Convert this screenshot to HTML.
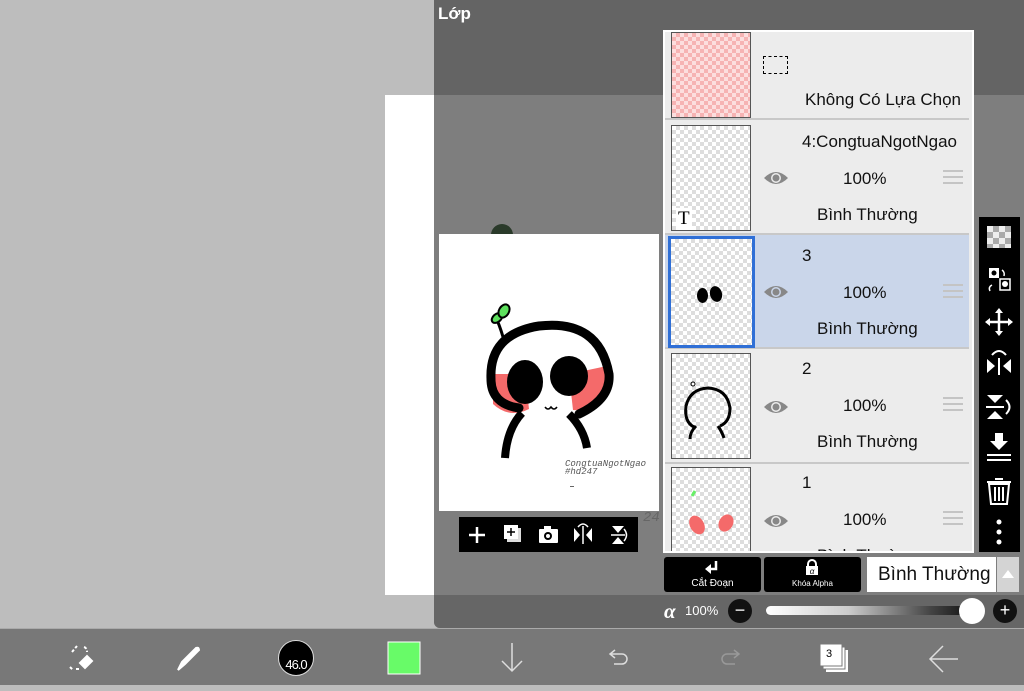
<!DOCTYPE html>
<html><head><meta charset="utf-8"><style>
*{margin:0;padding:0;box-sizing:border-box}
body{width:1024px;height:685px;overflow:hidden;position:relative;background:#bdbdbd;font-family:"Liberation Sans","Noto Sans CJK SC",sans-serif}
.a{position:absolute}
.chk{background-color:#fff;background-image:linear-gradient(45deg,#ddd 25%,transparent 25%,transparent 75%,#ddd 75%),linear-gradient(45deg,#ddd 25%,transparent 25%,transparent 75%,#ddd 75%);background-size:8px 8px;background-position:0 0,4px 4px}
.pchk{background-color:#fcdede;background-image:linear-gradient(45deg,#f6b3b3 25%,transparent 25%,transparent 75%,#f6b3b3 75%),linear-gradient(45deg,#f6b3b3 25%,transparent 25%,transparent 75%,#f6b3b3 75%);background-size:8px 8px;background-position:0 0,4px 4px}
.row{position:absolute;left:0;width:304px;background:#ececec;border-bottom:2px solid #c8c8c8}
.th{position:absolute;left:6px;width:80px;border:1px solid #555}
.t{position:absolute;color:#111;font-size:17px;white-space:nowrap}
.eye{position:absolute;left:98px;width:26px;height:16px}
.ham{position:absolute;left:278px;width:20px}
.ham i{display:block;height:2px;background:#c4c4c4;margin-bottom:4px}
</style></head><body>
<div class="a" style="left:385px;top:95px;width:49px;height:500px;background:#fff"></div>
<!-- panel -->
<div class="a" style="left:434px;top:0;width:590px;height:628px;background:#7e7e7e;border-bottom-left-radius:6px;overflow:hidden">
  <div class="a" style="left:0;top:0;width:590px;height:95px;background:#646464"></div>
  <div class="a" style="left:0;top:595px;width:590px;height:33px;background:#666"></div>
  <div class="a" style="left:4px;top:4px;color:#fff;font-weight:bold;font-size:17px">Lớp</div>
</div>
<div class="a" style="left:491px;top:224px;width:22px;height:14px;border-radius:11px 11px 0 0;background:#2a3a2a"></div>
<!-- preview -->
<div class="a" style="left:439px;top:234px;width:220px;height:277px;background:#fff">
<svg width="220" height="277" viewBox="0 0 220 277">
 <path d="M66 110 Q62 95 58 86" stroke="#000" stroke-width="3" fill="none"/>
 <ellipse cx="58" cy="84" rx="6" ry="4" transform="rotate(-40 58 84)" fill="#5de05d" stroke="#000" stroke-width="2"/>
 <ellipse cx="65" cy="77" rx="5" ry="7" transform="rotate(30 65 77)" fill="#5de05d" stroke="#000" stroke-width="2"/>
 <path d="M54 140 L54 170 Q70 185 90 175 L86 140Z" fill="#f46a6a"/>
 <path d="M130 140 L168 132 L168 155 Q150 178 134 176Z" fill="#f46a6a"/>
 <path d="M80 174 Q52 170 52 145 Q50 100 100 92 Q160 85 170 140 Q172 165 140 180" stroke="#000" stroke-width="9" fill="none" stroke-linecap="round"/>
 <ellipse cx="86" cy="148" rx="18" ry="22" fill="#000"/>
 <ellipse cx="130" cy="142" rx="19" ry="20" fill="#000"/>
 <path d="M83 179 Q68 195 66 224" stroke="#000" stroke-width="8" fill="none"/>
 <path d="M130 180 Q145 195 148 214" stroke="#000" stroke-width="8" fill="none"/>
 <path d="M106 173 q3 4 6 0 q3 4 6 0" stroke="#000" stroke-width="1.5" fill="none"/>
 <text x="126" y="232" font-family="Liberation Mono" font-style="italic" font-size="9" fill="#555">CongtuaNgotNgao</text>
 <text x="126" y="240" font-family="Liberation Mono" font-style="italic" font-size="9" fill="#555">#hd247</text>
 <rect x="131" y="252" width="4" height="1" fill="#666"/>
</svg></div>
<div class="a" style="left:643px;top:510px;color:#666;font-family:'Liberation Mono';font-style:italic;font-size:14px">24</div>
<div class="a" style="left:459px;top:517px;width:179px;height:35px;background:#000">
<svg width="179" height="35" viewBox="0 0 179 35" fill="#fff" stroke="#fff">
 <path d="M18 10v16M10 18h16" stroke-width="2.5"/>
 <rect x="48" y="11" width="14" height="14" fill="#ddd" stroke="none"/><rect x="45" y="8" width="14" height="14" stroke="none"/><path d="M52 11v8M48 15h8" stroke="#000" stroke-width="1.5"/>
 <rect x="80" y="12" width="19" height="14" rx="1" stroke="none"/><rect x="85" y="9" width="7" height="4" stroke="none"/><circle cx="89" cy="19" r="4" fill="#000" stroke="none"/><circle cx="89" cy="19" r="2" stroke="none"/>
 <path d="M115 11l6 7-6 7z M133 11l-6 7 6 7z" stroke="none"/><path d="M124 9v18" stroke-width="1.5"/><path d="M119 10q5-6 10 0" fill="none" stroke-width="1.5"/>
 <path d="M153 9h12l-6 7z M153 27h12l-6-7z" stroke="none"/><path d="M152 18h14" stroke-width="1.5"/><path d="M165 12q5 6 0 12" fill="none" stroke-width="1.5"/>
</svg></div>
<!-- layers -->
<div class="a" style="left:663px;top:30px;width:311px;height:523px;background:#fff;border:2px solid #fff;overflow:hidden">
 <div class="a" style="left:0;top:0;width:307px;height:519px;background:#ececec;overflow:hidden">
  <div class="row" style="top:0;height:88px"><div class="th pchk" style="top:0;height:86px"></div>
   <div class="a" style="left:98px;top:24px;width:25px;height:18px;border:1px dashed #000"></div>
   <div class="t" style="left:140px;top:58px">Không Có Lựa Chọn</div></div>
  <div class="row" style="top:89px;height:114px"><div class="th chk" style="top:4px;height:106px"><span class="a" style="left:4px;bottom:0;font-family:'Liberation Serif';font-size:19px;background:#fff;padding:0 2px">T</span></div>
   <svg class="eye" style="top:49px" viewBox="0 0 26 16"><path d="M1 8Q13-4 25 8Q13 20 1 8Z" fill="#888"/><circle cx="13" cy="8" r="5" fill="#ececec"/><circle cx="13" cy="8" r="3.5" fill="#888"/></svg>
   <div class="t" style="left:137px;top:11px">4:CongtuaNgotNgao</div><div class="t" style="left:178px;top:48px">100%</div><div class="t" style="left:152px;top:84px">Bình Thường</div>
   <div class="ham" style="top:49px"><i></i><i></i><i></i></div></div>
  <div class="row" style="top:203px;height:114px;background:#cad6ea"><div class="th chk" style="left:3px;top:1px;width:87px;height:112px;border:3px solid #2f6fd6"></div>
   <div class="a" style="left:32px;top:53px;width:11px;height:15px;border-radius:50%;background:#000"></div><div class="a" style="left:45px;top:51px;width:12px;height:16px;border-radius:50%;background:#000;transform:rotate(-15deg)"></div>
   <svg class="eye" style="top:49px" viewBox="0 0 26 16"><path d="M1 8Q13-4 25 8Q13 20 1 8Z" fill="#888"/><circle cx="13" cy="8" r="5" fill="#cad6ea"/><circle cx="13" cy="8" r="3.5" fill="#888"/></svg>
   <div class="t" style="left:137px;top:11px">3</div><div class="t" style="left:178px;top:48px">100%</div><div class="t" style="left:152px;top:84px">Bình Thường</div>
   <div class="ham" style="top:49px"><i></i><i></i><i></i></div></div>
  <div class="row" style="top:318px;height:114px"><div class="th chk" style="top:3px;height:106px">
   <svg width="78" height="104" viewBox="0 0 78 104"><path d="M22 73Q12 68 14 52Q18 35 36 34Q55 35 58 54Q58 68 48 72" stroke="#000" stroke-width="3" fill="none"/><path d="M24 72Q18 78 18 85M46 72Q50 78 52 84" stroke="#000" stroke-width="3" fill="none"/><circle cx="21" cy="30" r="2" stroke="#000" fill="none"/></svg></div>
   <svg class="eye" style="top:49px" viewBox="0 0 26 16"><path d="M1 8Q13-4 25 8Q13 20 1 8Z" fill="#888"/><circle cx="13" cy="8" r="5" fill="#ececec"/><circle cx="13" cy="8" r="3.5" fill="#888"/></svg>
   <div class="t" style="left:137px;top:9px">2</div><div class="t" style="left:178px;top:46px">100%</div><div class="t" style="left:152px;top:82px">Bình Thường</div>
   <div class="ham" style="top:47px"><i></i><i></i><i></i></div></div>
  <div class="row" style="top:432px;height:100px"><div class="th chk" style="top:3px;height:100px">
   <svg width="78" height="100" viewBox="0 0 78 100"><path d="M20 28l3-5" stroke="#6e6" stroke-width="3"/><ellipse cx="25" cy="57" rx="7" ry="10" transform="rotate(-30 25 57)" fill="#f46a6a"/><ellipse cx="54" cy="55" rx="7" ry="9" transform="rotate(30 54 55)" fill="#f46a6a"/></svg></div>
   <svg class="eye" style="top:49px" viewBox="0 0 26 16"><path d="M1 8Q13-4 25 8Q13 20 1 8Z" fill="#888"/><circle cx="13" cy="8" r="5" fill="#ececec"/><circle cx="13" cy="8" r="3.5" fill="#888"/></svg>
   <div class="t" style="left:137px;top:9px">1</div><div class="t" style="left:178px;top:46px">100%</div><div class="t" style="left:152px;top:82px">Bình Thường</div>
   <div class="ham" style="top:47px"><i></i><i></i><i></i></div></div>
 </div></div>
<!-- right toolbar -->
<div class="a" style="left:979px;top:217px;width:41px;height:335px;background:#000">
<svg width="41" height="335" viewBox="0 0 41 335" fill="#fff" stroke="#fff">
 <rect x="8" y="9" width="24" height="22" fill="#aaa" stroke="none"/>
 <path d="M8 9h6v6h-6zM20 9h6v6h-6zM14 15h6v6h-6zM26 15h6v6h-6zM8 21h6v6h-6zM20 21h6v6h-6zM14 27h6v4h-6zM26 27h6v4h-6z" fill="#eee" stroke="none"/>
 <rect x="10" y="51" width="10" height="10" stroke="none"/><circle cx="15" cy="56" r="2.5" fill="#000" stroke="none"/>
 <rect x="21" y="62" width="10" height="11" fill="none" stroke-width="1.5"/><circle cx="26" cy="67" r="3" stroke="none"/>
 <path d="M23 53q3 2 2 6M11 74q-2-4 2-6" fill="none" stroke-width="1.5"/>
 <path d="M20 94v22M9 105h22" stroke-width="2.5"/><path d="M20 91l-4 5h8zM20 119l-4-5h8zM6 105l5-4v8zM34 105l-5-4v8z" stroke="none"/>
 <path d="M8 142l8 7-8 7zM32 142l-8 7 8 7z" stroke="none"/><path d="M20 141v17" stroke-width="2"/><path d="M13 138q7-8 14 0" fill="none" stroke-width="2"/>
 <path d="M8 178h16l-8 8zM8 202h16l-8-8z" stroke="none"/><path d="M7 190h18" stroke-width="2"/><path d="M27 183q7 7 0 14" fill="none" stroke-width="2"/>
 <path d="M16 216h8v8h5l-9 9-9-9h5z" stroke="none"/><path d="M8 238h24M8 243h24" stroke-width="2"/>
 <path d="M10 267h20l-2 20h-16z" fill="none" stroke-width="2"/><path d="M8 265h24M16 262h8M16 270v14M20 270v14M24 270v14" stroke-width="2"/>
 <circle cx="20" cy="305" r="2.5" stroke="none"/><circle cx="20" cy="315" r="2.5" stroke="none"/><circle cx="20" cy="325" r="2.5" stroke="none"/>
</svg></div>
<!-- buttons -->
<div class="a" style="left:664px;top:557px;width:97px;height:35px;background:#000;border-radius:3px;color:#fff;font-size:10px;text-align:center">
 <svg class="a" style="left:39px;top:3px" width="18" height="17" viewBox="0 0 18 17"><path d="M13 1v8H7" stroke="#fff" stroke-width="2.5" fill="none"/><path d="M2 9l6-5v10z" fill="#fff"/></svg>
 <div class="a" style="left:0;top:21px;width:97px">Cắt Đoạn</div></div>
<div class="a" style="left:764px;top:557px;width:97px;height:35px;background:#000;border-radius:3px;color:#fff;font-size:8px;text-align:center">
 <svg class="a" style="left:41px;top:2px" width="14" height="17" viewBox="0 0 14 17"><path d="M3 7V5a4 4 0 0 1 8 0v2" stroke="#fff" stroke-width="2" fill="none"/><rect x="1" y="7" width="12" height="9" fill="#fff"/><text x="7" y="15" font-size="8" text-anchor="middle" fill="#000" font-style="italic">α</text></svg>
 <div class="a" style="left:0;top:22px;width:97px">Khóa Alpha</div></div>
<div class="a" style="left:867px;top:557px;width:129px;height:35px;background:#fff;font-size:19px;color:#111;padding:7px 0 0 11px">Bình Thường</div>
<div class="a" style="left:997px;top:557px;width:22px;height:35px;background:#d4d4d4"><div class="a" style="left:5px;top:13px;border:6px solid transparent;border-bottom:8px solid #fff;border-top:0"></div></div>
<!-- alpha row -->
<div class="a" style="left:664px;top:599px;color:#fff;font-size:21px;font-style:italic;font-weight:bold;font-family:'Liberation Serif'">α</div>
<div class="a" style="left:685px;top:603px;color:#fff;font-size:13px">100%</div>
<div class="a" style="left:728px;top:599px;width:24px;height:24px;border-radius:50%;background:#111;color:#fff;text-align:center;font-size:18px;line-height:22px">−</div>
<div class="a" style="left:766px;top:606px;width:206px;height:9px;border-radius:5px;background:linear-gradient(90deg,#fff,#ccc 40%,#444 80%,#111)"></div>
<div class="a" style="left:959px;top:598px;width:26px;height:26px;border-radius:50%;background:#fff"></div>
<div class="a" style="left:993px;top:599px;width:24px;height:24px;border-radius:50%;background:#111;color:#fff;text-align:center;font-size:18px;line-height:23px">+</div>
<!-- bottom bar -->
<div class="a" style="left:0;top:628px;width:1024px;height:57px;background:#787878;border-top:1px solid #aaa">
<svg width="1024" height="57" viewBox="0 0 1024 57" fill="none" stroke="#fff" stroke-width="2">
 <path d="M72 23l5-6M70 38l3 3M84 18q3 1 3 5M76 40h3" stroke-dasharray="3 2"/><path d="M80 34l7-7 5 5-7 7z" fill="#fff"/>
 <path d="M178 41l4-8 14-14q3-1 3 2l-14 14z" fill="#fff"/>
 <rect x="388" y="13" width="32" height="32" fill="#68fb68" stroke="#fff" stroke-width="1"/>
 <path d="M512 14v28M502 32l10 10 10-10" stroke="#ddd" stroke-width="1.5"/>
 <path d="M615 21l-5 4 5 4M610 25h12a5 5 0 0 1 0 10h-8" stroke="#ddd" stroke-width="1.5"/>
 <path d="M734 21l5 4-5 4M739 25h-12a5 5 0 0 0 0 10h8" stroke="#999" stroke-width="1.5"/>
 <path d="M930 30h28M943 17l-13 13 13 13" stroke="#ddd" stroke-width="1.5"/>
 <rect x="826" y="21" width="22" height="22" fill="#fff" stroke="none"/><rect x="823" y="18" width="22" height="22" fill="#fff" stroke="#787878" stroke-width="1"/><rect x="820" y="15" width="22" height="22" fill="#fff" stroke="#787878" stroke-width="1"/>
</svg>
<div class="a" style="left:826px;top:19px;font-size:11px;color:#000">3</div>
<div class="a" style="left:278px;top:11px;width:36px;height:36px;border-radius:50%;background:#000;border:1px solid #ddd;color:#fff;font-size:13px;text-align:center;line-height:48px;letter-spacing:-1px">46.0</div>
</div>
</body></html>
